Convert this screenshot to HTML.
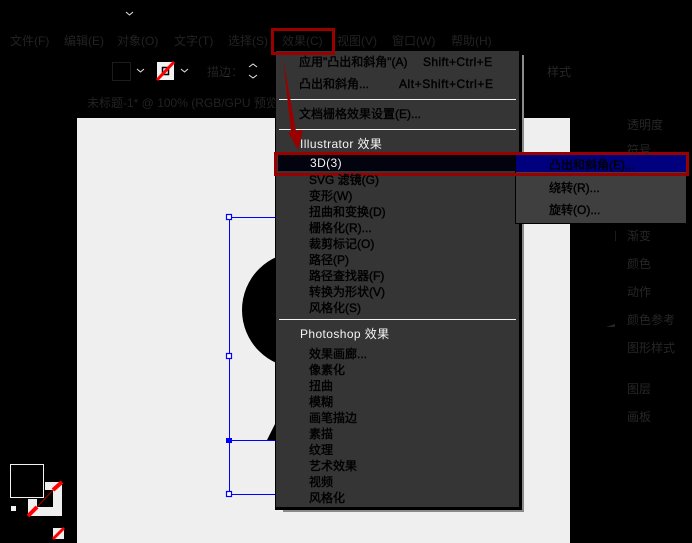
<!DOCTYPE html>
<html><head><meta charset="utf-8"><style>
html,body{margin:0;padding:0;background:#000}
#p{position:relative;width:692px;height:543px;overflow:hidden;background:#000;font:12px/16px "Liberation Sans","WenQuanYi Zen Hei","Noto Sans CJK SC",sans-serif}
#p svg{position:absolute;left:0;top:0}
#p span{position:absolute;white-space:nowrap;line-height:16px}
.d{color:#222}
.m{color:#000;-webkit-text-stroke:.4px #000}
.w{color:#f4f4f4;letter-spacing:.4px}
.r{color:#262626}
</style></head><body><div id="p">
<svg width="692" height="543" viewBox="0 0 692 543">
<rect x="77" y="118" width="493" height="425" fill="#efefef"/>
<circle cx="300" cy="310" r="58" fill="#000"/>
<polygon points="267,440 276,422 276,440" fill="#000"/>
<g stroke="#00f" fill="none"><path d="M229.500 217V494M229 217.500H276M229 440.500H276M229 494.500H276"/></g>
<g fill="#fff" stroke="#00f" stroke-width="1.200"><rect x="226.500" y="214.500" width="5" height="5"/><rect x="226.500" y="353.500" width="5" height="5"/><rect x="226.500" y="491.500" width="5" height="5"/></g>
<rect x="226" y="438" width="6" height="5" fill="#00f"/>
<!-- menu -->
<rect x="283" y="55" width="241" height="457" fill="#8a8a8a"/>
<rect x="275" y="50" width="247" height="460" fill="#000"/>
<rect x="276" y="51" width="243" height="456" fill="#353535"/>
<path d="M279 99.500H516M279 129.500H516M279 319.500H516" stroke="#f4f4f4"/>
<rect x="278" y="155" width="238" height="16" fill="#03030f"/>
<rect x="515" y="153" width="173" height="71" fill="#000"/>
<rect x="516" y="153" width="170" height="70" fill="#3f3f3f"/>
<rect x="516" y="155" width="170" height="17" fill="#00007f"/>
<rect x="275.500" y="153.500" width="412" height="21" fill="none" stroke="#9b0000" stroke-width="3"/>
<rect x="272.500" y="29.500" width="61" height="24" fill="none" stroke="#9b0000" stroke-width="3"/>
<polygon points="283,58 296,131 303,130 298,150 288,132 291,132" fill="#9b0000"/>
<!-- toolbar -->
<rect x="112.500" y="62.500" width="18" height="18" fill="none" stroke="#1c1c1c"/>
<rect x="157" y="62" width="17" height="18" fill="#f2f2f2"/>
<rect x="162.500" y="67.500" width="6" height="7" fill="none" stroke="#000" stroke-width="1.500"/>
<path d="M157 80L174 62" stroke="#f00" stroke-width="3"/>
<path d="M137 69l3.500 3 3.500-3M181 69l3.500 3 3.500-3M249 67l4-3 4 3M249 75l4 3 4-3M126 12l3.500 3 3.500-3" fill="none" stroke="#e8e8e8"/>
<rect x="224" y="76" width="5" height="1" fill="#e8e8e8"/>
<!-- right panel marks -->
<rect x="615" y="231" width="1" height="10" fill="#1c1c1c"/>
<polygon points="606,327 615,324 615,327" fill="#262626"/>
<!-- tools -->
<path d="M45 482H62V516H28V499H37V507H53V490H45Z" fill="#efefef"/>
<path d="M28 516L37 507" stroke="#f00" stroke-width="4"/>
<path d="M53 490L62 482" stroke="#f00" stroke-width="4"/>
<path d="M37 507L53 490" stroke="#a00000" stroke-width="1"/>
<rect x="10.500" y="464.500" width="33" height="33" fill="#000" stroke="#f2f2f2"/>
<rect x="11" y="506" width="5" height="5" fill="#f2f2f2"/>
<rect x="53" y="528" width="11" height="11" fill="#efefef"/>
<path d="M53 539L64 528" stroke="#f00" stroke-width="3"/>
</svg>

<span class="d" style="left:10px;top:33px">文件(F)</span>
<span class="d" style="left:64px;top:33px">编辑(E)</span>
<span class="d" style="left:117px;top:33px">对象(O)</span>
<span class="d" style="left:174px;top:33px">文字(T)</span>
<span class="d" style="left:228px;top:33px">选择(S)</span>
<span class="d" style="left:282px;top:33px">效果(C)</span>
<span class="d" style="left:337px;top:33px">视图(V)</span>
<span class="d" style="left:392px;top:33px">窗口(W)</span>
<span class="d" style="left:451px;top:33px">帮助(H)</span>

<span class="d" style="left:207px;top:64px">描边：</span>
<span class="d" style="left:87px;top:95px;width:188px;overflow:hidden">未标题-1* @ 100% (RGB/GPU 预览)</span>

<span class="r" style="left:547px;top:64px">样式</span>
<span class="r" style="left:627px;top:117px">透明度</span>
<span class="r" style="left:627px;top:142px">符号</span>
<span class="r" style="left:627px;top:228px">渐变</span>
<span class="r" style="left:627px;top:256px">颜色</span>
<span class="r" style="left:627px;top:284px">动作</span>
<span class="r" style="left:627px;top:312px">颜色参考</span>
<span class="r" style="left:627px;top:340px">图形样式</span>
<span class="r" style="left:627px;top:381px">图层</span>
<span class="r" style="left:627px;top:409px">画板</span>

<span class="m" style="left:299px;top:54px">应用"凸出和斜角"(A)</span>
<span class="m" style="left:423px;top:54px;letter-spacing:.4px">Shift+Ctrl+E</span>
<span class="m" style="left:299px;top:76px">凸出和斜角...</span>
<span class="m" style="left:399px;top:76px;letter-spacing:.55px">Alt+Shift+Ctrl+E</span>
<span class="m" style="left:299px;top:106px">文档栅格效果设置(E)...</span>
<span class="w" style="left:300px;top:136px">Illustrator 效果</span>
<span class="w" style="left:310px;top:155px">3D(3)</span>
<span class="m" style="left:549px;top:157px">凸出和斜角(E)...</span>
<span class="m" style="left:549px;top:180px">绕转(R)...</span>
<span class="m" style="left:549px;top:202px">旋转(O)...</span>
<span class="m" style="left:309px;top:172px">SVG 滤镜(G)</span>
<span class="m" style="left:309px;top:188px">变形(W)</span>
<span class="m" style="left:309px;top:204px">扭曲和变换(D)</span>
<span class="m" style="left:309px;top:220px">栅格化(R)...</span>
<span class="m" style="left:309px;top:236px">裁剪标记(O)</span>
<span class="m" style="left:309px;top:252px">路径(P)</span>
<span class="m" style="left:309px;top:268px">路径查找器(F)</span>
<span class="m" style="left:309px;top:284px">转换为形状(V)</span>
<span class="m" style="left:309px;top:300px">风格化(S)</span>
<span class="w" style="left:300px;top:326px">Photoshop 效果</span>
<span class="m" style="left:309px;top:346px">效果画廊...</span>
<span class="m" style="left:309px;top:362px">像素化</span>
<span class="m" style="left:309px;top:378px">扭曲</span>
<span class="m" style="left:309px;top:394px">模糊</span>
<span class="m" style="left:309px;top:410px">画笔描边</span>
<span class="m" style="left:309px;top:426px">素描</span>
<span class="m" style="left:309px;top:442px">纹理</span>
<span class="m" style="left:309px;top:458px">艺术效果</span>
<span class="m" style="left:309px;top:474px">视频</span>
<span class="m" style="left:309px;top:490px">风格化</span>
</div></body></html>
